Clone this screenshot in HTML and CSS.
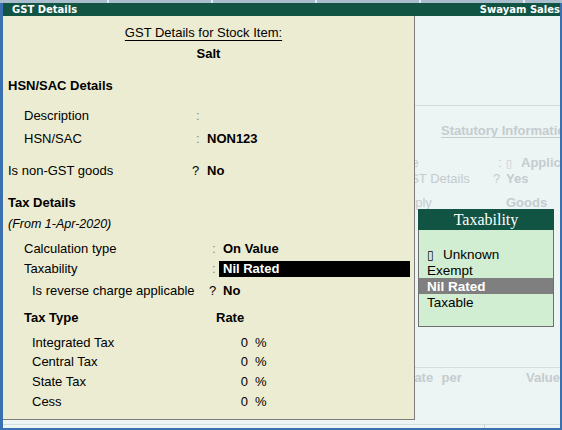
FILE: index.html
```html
<!DOCTYPE html>
<html>
<head>
<meta charset="utf-8">
<link rel="stylesheet" href="styles.css">
</head>
<body>
<div class="topstrip"><span class="tick"></span><span class="tick"></span><span class="tick"></span><span class="tick"></span><span class="tick"></span></div>
<div class="frame">
  <div class="titlebar"><span>GST Details</span><span>Swayam Sales</span></div>
  <div class="screen">
    <div class="backdrop">
      <div class="bk-top"></div>
      <div class="bk-title">Statutory Information</div>
      <div class="bk-row first">
        <span class="bk-label shifted">GST applicable</span>
        <span class="bk-sep colon">:</span>
        <span class="bk-val"><span class="tofu">▯</span>Applicable</span>
      </div>
      <div class="bk-row">
        <span class="bk-label">Set/alter GST Details</span>
        <span class="bk-sep">?</span>
        <span class="bk-val">Yes</span>
      </div>
      <div class="bk-row third">
        <span class="bk-label">Type of supply</span>
        <span class="bk-sep"></span>
        <span class="bk-val">Goods</span>
      </div>
      <div class="bk-mid"></div>
      <div class="bk-cols">
        <span class="bk-rate">Rate</span>
        <span class="bk-per">per</span>
        <span class="bk-value">Value</span>
      </div>
      <div class="bk-foot"><span class="bk-tick"></span></div>
    </div>

    <div class="panel">
      <div class="p-title"><span>GST Details for Stock Item:</span></div>
      <div class="p-item">Salt</div>

      <div class="row head gap16">HSN/SAC Details</div>
      <div class="row gap14">
        <span class="lab l2 w193">Description</span><span class="sep colon w11">:</span><span class="val"></span>
      </div>
      <div class="row gap7">
        <span class="lab l2 w193">HSN/SAC</span><span class="sep colon w11">:</span><span class="val b">NON123</span>
      </div>
      <div class="row gap16">
        <span class="lab l1 w189">Is non-GST goods</span><span class="sep w15">?</span><span class="val b">No</span>
      </div>

      <div class="row head gap16">Tax Details</div>
      <div class="row note gap5">(From 1-Apr-2020)</div>
      <div class="row gap9">
        <span class="lab l2 w209">Calculation type</span><span class="sep colon w7">:</span><span class="val b box">On Value</span>
      </div>
      <div class="row gap4">
        <span class="lab l2 w209">Taxability</span><span class="sep colon w7">:</span><span class="val b box hl">Nil Rated</span>
      </div>
      <div class="row gap6">
        <span class="lab l3 w206">Is reverse charge applicable</span><span class="sep w10">?</span><span class="val b box">No</span>
      </div>

      <div class="row gap11">
        <span class="lab l2 w213 b">Tax Type</span><span class="val b">Rate</span>
      </div>
      <div class="row gap9">
        <span class="lab l3 w213">Integrated Tax</span><span class="num">0</span><span class="pct">%</span>
      </div>
      <div class="row gap3">
        <span class="lab l3 w213">Central Tax</span><span class="num">0</span><span class="pct">%</span>
      </div>
      <div class="row gap4">
        <span class="lab l3 w213">State Tax</span><span class="num">0</span><span class="pct">%</span>
      </div>
      <div class="row gap4">
        <span class="lab l3 w213">Cess</span><span class="num">0</span><span class="pct">%</span>
      </div>
    </div>

    <div class="popup">
      <div class="popup-head">Taxability</div>
      <div class="popup-body">
        <div class="opt"><span class="tofu">▯</span>Unknown</div>
        <div class="opt">Exempt</div>
        <div class="opt sel">Nil Rated</div>
        <div class="opt">Taxable</div>
      </div>
    </div>
  </div>
</div>
</body>
</html>
```
FILE: styles.css
```css
* { box-sizing: border-box; }

body {
  margin: 0;
  width: 562px;
  height: 430px;
  overflow: hidden;
  font-family: "Liberation Sans", Arial, sans-serif;
  font-size: 13px;
  color: #000;
  background: #edf4f4;
}

.topstrip {
  height: 3px;
  background: #a9bdcd;
  display: flex;
  gap: 102px;
  padding-left: 107px;
}
.tick { width: 2px; height: 3px; background: #e2eaf0; }

.frame {
  height: 427px;
  border-left: 3px solid #3a70b0;
  border-right: 2px solid #3a70b0;
  border-bottom: 2px solid #3a70b0;
  display: flex;
  flex-direction: column;
}

.titlebar {
  height: 13px;
  flex: none;
  background: #115443;
  color: #fff;
  font-family: "DejaVu Sans", sans-serif;
  font-weight: bold;
  font-size: 10px;
  line-height: 13px;
  display: flex;
  justify-content: space-between;
  padding-left: 9px;
}

.screen {
  position: relative;
  flex: 1;
  overflow: hidden;
  background: #edf4f4;
}

/* faded screen behind the dialog */
.backdrop { color: #c4cccf; white-space: nowrap; }
.bk-top { height: 90px; border-bottom: 1px solid #d5dddd; }
.bk-title {
  margin: 17px 0 0 438px;
  height: 16px;
  line-height: 16px;
  font-weight: bold;
  text-decoration: underline;
  text-underline-offset: 2px;
}
.bk-row { display: flex; height: 16px; line-height: 16px; }
.bk-row.first { margin-top: 16px; }
.bk-row.third { margin-top: 8px; }
.bk-label { width: 145px; margin-left: 345px; flex: none; overflow: hidden; }
.bk-label.shifted { width: 163px; margin-left: 327px; }
.bk-sep { width: 13px; flex: none; }
.bk-sep.colon { padding-left: 5px; }
.bk-val { font-weight: bold; }
.tofu {
  display: inline-block;
  width: 15px;
  font-family: "DejaVu Sans", sans-serif;
  font-weight: normal;
  font-size: 11px;
}
.bk-mid { height: 157px; border-bottom: 1px solid #d5dddd; }
.bk-cols {
  margin-top: 2px;
  height: 16px;
  line-height: 16px;
  display: flex;
  font-weight: bold;
}
.bk-rate { margin-left: 402px; width: 38px; }
.bk-per { width: 88px; }
.bk-foot {
  margin-top: 38px;
  height: 4px;
  border-top: 1px solid #d5dddd;
  display: flex;
}
.bk-tick { margin-left: 481px; width: 1px; height: 3px; background: #c8d0d0; }

/* dialog panel */
.panel {
  position: absolute;
  left: 0;
  top: 0;
  width: 412px;
  height: 404px;
  background: #ececd2;
  border-right: 1px solid #7c7c7c;
  border-bottom: 1px solid #7c7c7c;
  padding-top: 9px;
  white-space: nowrap;
}
.p-title {
  height: 16px;
  line-height: 16px;
  text-align: center;
  padding-right: 10px;
}
.p-title span { text-decoration: underline; text-underline-offset: 3px; }
.p-item {
  margin-top: 5px;
  height: 16px;
  line-height: 16px;
  text-align: center;
  font-weight: bold;
}

.row { display: flex; height: 16px; line-height: 16px; }
.row.head { font-weight: bold; padding-left: 5px; }
.row.note { font-style: italic; font-size: 12.5px; padding-left: 5px; }
.gap3 { margin-top: 3px; }
.gap4 { margin-top: 4px; }
.gap5 { margin-top: 5px; }
.gap6 { margin-top: 6px; }
.gap7 { margin-top: 7px; }
.gap9 { margin-top: 9px; }
.gap11 { margin-top: 11px; }
.gap14 { margin-top: 14px; }
.gap16 { margin-top: 16px; }

.lab { flex: none; }
.l1 { padding-left: 5px; }
.l2 { padding-left: 21px; }
.l3 { padding-left: 29px; }
.w189 { width: 189px; }
.w193 { width: 193px; }
.w206 { width: 206px; }
.w209 { width: 209px; }
.w213 { width: 213px; }

.sep { flex: none; }
.sep.colon { color: #8a8a80; }
.w7 { width: 7px; }
.w10 { width: 10px; }
.w11 { width: 11px; }
.w15 { width: 15px; }

.b { font-weight: bold; }
.val.box { width: 191px; padding-left: 4px; }
.val.hl { background: #000; color: #fff; }

.num { width: 32px; text-align: right; flex: none; }
.pct { margin-left: 7px; }

/* Taxability list */
.popup {
  position: absolute;
  left: 415px;
  top: 193px;
  width: 136px;
}
.popup-head {
  height: 21px;
  line-height: 21px;
  background: #115443;
  color: #fff;
  font-family: "Liberation Serif", serif;
  font-size: 16px;
  text-align: center;
}
.popup-body {
  background: #d2eed2;
  border: 1px solid #6f6f6f;
  border-top: 0;
  padding: 16px 0;
}
.opt {
  height: 16px;
  line-height: 17px;
  padding-left: 8px;
  font-size: 13.5px;
}
.opt.sel { background: #7f7f7f; color: #fff; font-weight: bold; }
.opt .tofu { width: 16px; font-size: 12px; }
```
